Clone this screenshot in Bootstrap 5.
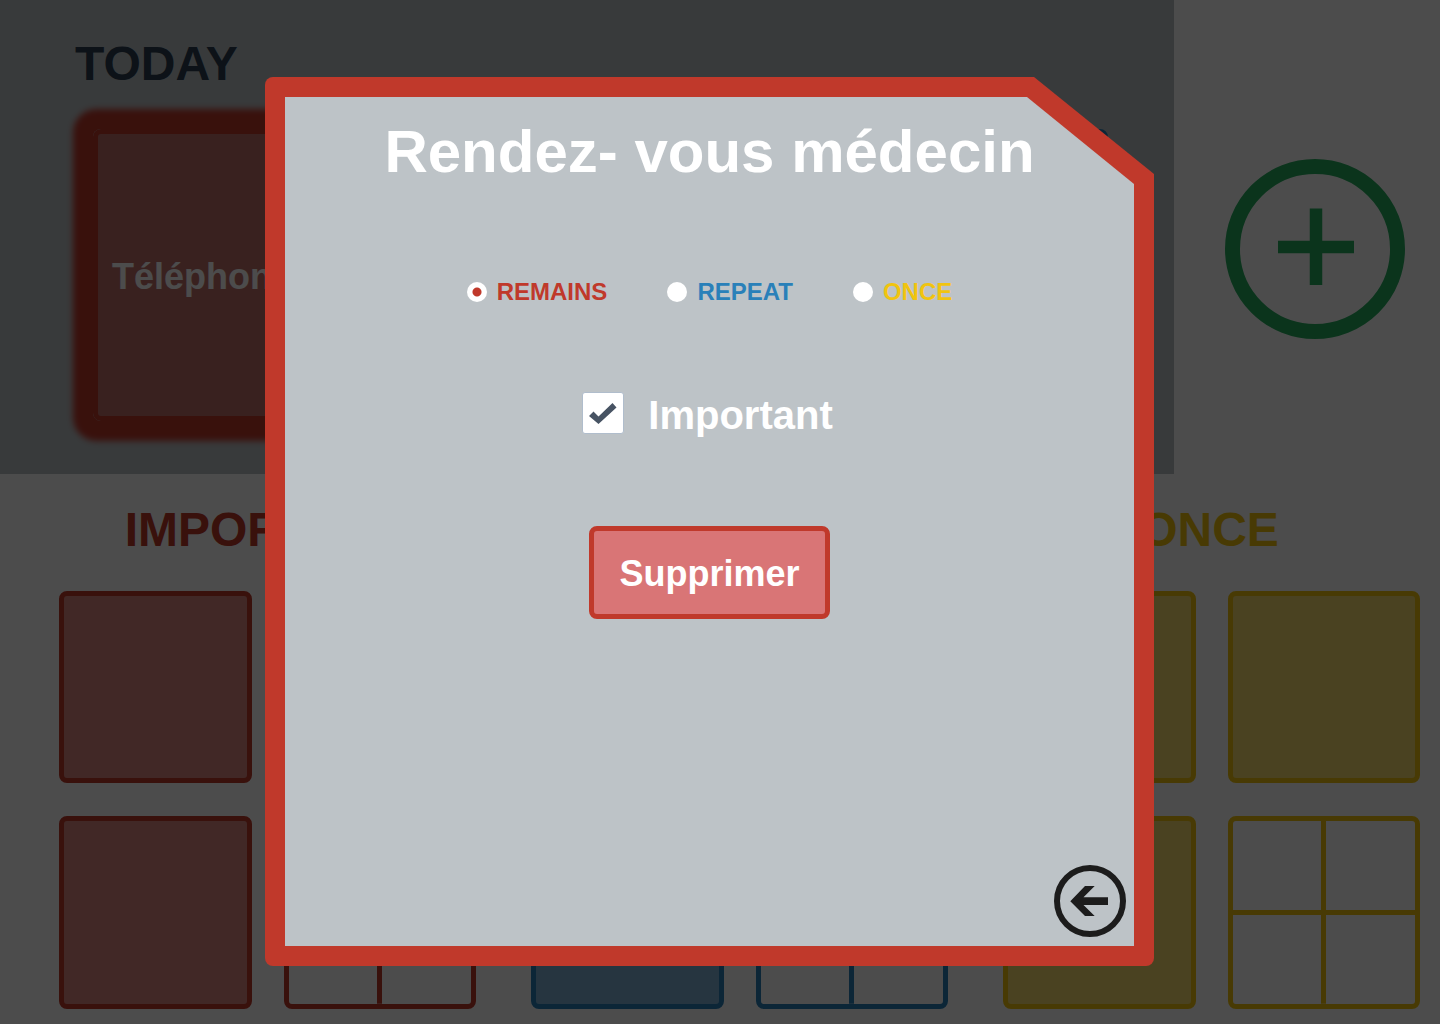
<!DOCTYPE html>
<html lang="fr">
<head>
<meta charset="utf-8">
<meta name="viewport" content="width=device-width, initial-scale=1">
<title>Rendez-vous médecin</title>
<link href="https://cdn.jsdelivr.net/npm/bootstrap@5.3.0/dist/css/bootstrap.min.css" rel="stylesheet">
<style>
:root{--red:192,57,43;--blue:41,128,185;--yellow:241,196,15;--silver:#bdc3c7}
body{font-family:"Liberation Sans",Arial,sans-serif;font-weight:700;background:#fff}
.tone-red{--tone:var(--red)}
.tone-blue{--tone:var(--blue)}
.tone-yellow{--tone:var(--yellow)}
.section-title{font-size:48px;line-height:48px;font-weight:700;margin:0}
/* today strip */
.today{flex:1 1 0;background:var(--silver);padding:40px 66px 53px 75px}
.today .section-title{color:#2c3e50}
.today-tiles{display:grid;grid-template-columns:repeat(3,1fr);gap:70px;margin-top:41px;padding-left:18px}
.add-area{width:266px;padding:159px 35px 0 51px}
.add-btn{width:180px;height:180px;color:#27ae60}
/* tiles */
.tile{display:flex;align-items:center;aspect-ratio:1;min-width:0;padding:4px 14px 0;border:5px solid rgb(var(--tone));border-radius:8px;background:rgba(var(--tone),.6);color:#fff;font-size:36px;font-weight:700;white-space:nowrap}
.tile-active{box-shadow:0 0 6px 20px rgb(var(--tone))}
.tile-split{background:linear-gradient(rgb(var(--tone)),rgb(var(--tone))) center/5px 100% no-repeat,linear-gradient(rgb(var(--tone)),rgb(var(--tone))) center/100% 5px no-repeat}
.groups{display:grid;grid-template-columns:repeat(3,1fr);gap:55px;padding:32px 20px 15px 59px}
.groups .section-title{color:rgb(var(--tone));margin-bottom:37px;padding-right:4px;text-align:center}
.group-tiles{display:grid;grid-template-columns:1fr 1fr;gap:33px 32px}
/* dialog */
.veil{background:rgba(0,0,0,.7);padding:19px 21px 0 0}
.sheet{width:889px;max-width:100%;height:889px;padding:20px;border-radius:8px;background:rgb(var(--red));clip-path:polygon(0 0,calc(100% - 120px) 0,100% 97px,100% 100%,0 100%)}
.sheet-body{background:var(--silver);padding:25px 8px 9px;clip-path:polygon(0 0,calc(100% - 107px) 0,100% 87px,100% 100%,0 100%)}
.sheet-title{font-size:60px;line-height:60px;font-weight:700;color:#fff;margin:0 0 98px}
.choices{gap:60px;margin-bottom:88px}
.choice{font-size:24px;line-height:24px;color:rgb(var(--tone));gap:10px}
.choice input{appearance:none;width:20px;height:20px;margin:0;border-radius:50%;background:#fff}
.choice input:checked{background:radial-gradient(circle,rgb(var(--tone)) 4px,#fff 5px)}
.flag{gap:24px;font-size:40px;line-height:46px;color:#fff;margin-bottom:88px;padding-right:4px}
.flag input{appearance:none;width:42px;height:42px;margin:0;border:1px solid #b0bdcc;border-radius:3px;background:#fff}
.flag input:checked{background:#fff url("data:image/svg+xml,%3Csvg xmlns='http://www.w3.org/2000/svg' viewBox='0 0 40 40'%3E%3Cpath fill='%23475363' d='M6 23l4.500-4.500L15.500 23.500 29.500 10l4 4.500L15.500 31z'/%3E%3C/svg%3E") center/40px 40px no-repeat}
.delete-btn{border:5px solid rgb(var(--red));border-radius:8px;background:#d97576;color:#fff;font-size:36px;line-height:41px;font-weight:700;padding:22px 25px 20px}
.back-btn{width:72px;height:72px;color:#1c1c1c}
</style>
<script src="https://cdn.jsdelivr.net/npm/bootstrap@5.3.0/dist/js/bootstrap.bundle.min.js"></script>
</head>
<body>
<main>
  <div class="d-flex">
    <section class="today">
      <h1 class="section-title">TODAY</h1>
      <div class="today-tiles">
        <div class="tile tile-active tone-red">Téléphoner</div>
        <div class="tile tone-yellow"></div>
        <div class="tile tone-blue"></div>
      </div>
    </section>
    <div class="add-area">
      <button type="button" class="add-btn d-block border-0 bg-transparent p-0" aria-label="Ajouter">
        <svg class="d-block" width="180" height="180" viewBox="0 0 180 180" fill="none" stroke="currentColor"><circle cx="90" cy="90" r="82.500" stroke-width="15"/><path stroke-width="12.500" d="M53 88h76M91 49.500v76.500"/></svg>
      </button>
    </div>
  </div>
  <div class="groups">
    <section class="tone-red">
      <h2 class="section-title">IMPORTANT</h2>
      <div class="group-tiles">
        <div class="tile"></div><div class="tile"></div>
        <div class="tile"></div><div class="tile tile-split"></div>
      </div>
    </section>
    <section class="tone-blue">
      <h2 class="section-title">REPEAT</h2>
      <div class="group-tiles">
        <div class="tile"></div><div class="tile"></div>
        <div class="tile"></div><div class="tile tile-split"></div>
      </div>
    </section>
    <section class="tone-yellow">
      <h2 class="section-title">ONCE</h2>
      <div class="group-tiles">
        <div class="tile"></div><div class="tile"></div>
        <div class="tile"></div><div class="tile tile-split"></div>
      </div>
    </section>
  </div>
</main>

<div class="veil position-fixed top-0 start-0 w-100 h-100 d-flex align-items-center justify-content-center">
  <div class="sheet" role="dialog" aria-modal="true" aria-labelledby="sheetTitle">
    <form class="sheet-body h-100 d-flex flex-column align-items-center">
      <h2 class="sheet-title text-center" id="sheetTitle">Rendez- vous médecin</h2>
      <div class="choices d-flex">
        <label class="choice d-flex align-items-center tone-red" for="remains"><input type="radio" name="kind" id="remains" checked>REMAINS</label>
        <label class="choice d-flex align-items-center tone-blue" for="repeat"><input type="radio" name="kind" id="repeat">REPEAT</label>
        <label class="choice d-flex align-items-center tone-yellow" for="once"><input type="radio" name="kind" id="once">ONCE</label>
      </div>
      <label class="flag d-flex align-items-start" for="important"><input type="checkbox" id="important" checked>Important</label>
      <button type="button" class="delete-btn">Supprimer</button>
      <button type="button" class="back-btn border-0 bg-transparent p-0 mt-auto align-self-end" aria-label="Retour">
        <svg class="d-block" width="72" height="72" viewBox="0 0 72 72"><circle cx="36" cy="36" r="33" fill="none" stroke="currentColor" stroke-width="6"/><path fill="currentColor" d="M16.300 36.300 31 21h9.700L29.500 32.300H54V40H29.500L40.700 51H31z"/></svg>
      </button>
    </form>
  </div>
</div>
</body>
</html>
